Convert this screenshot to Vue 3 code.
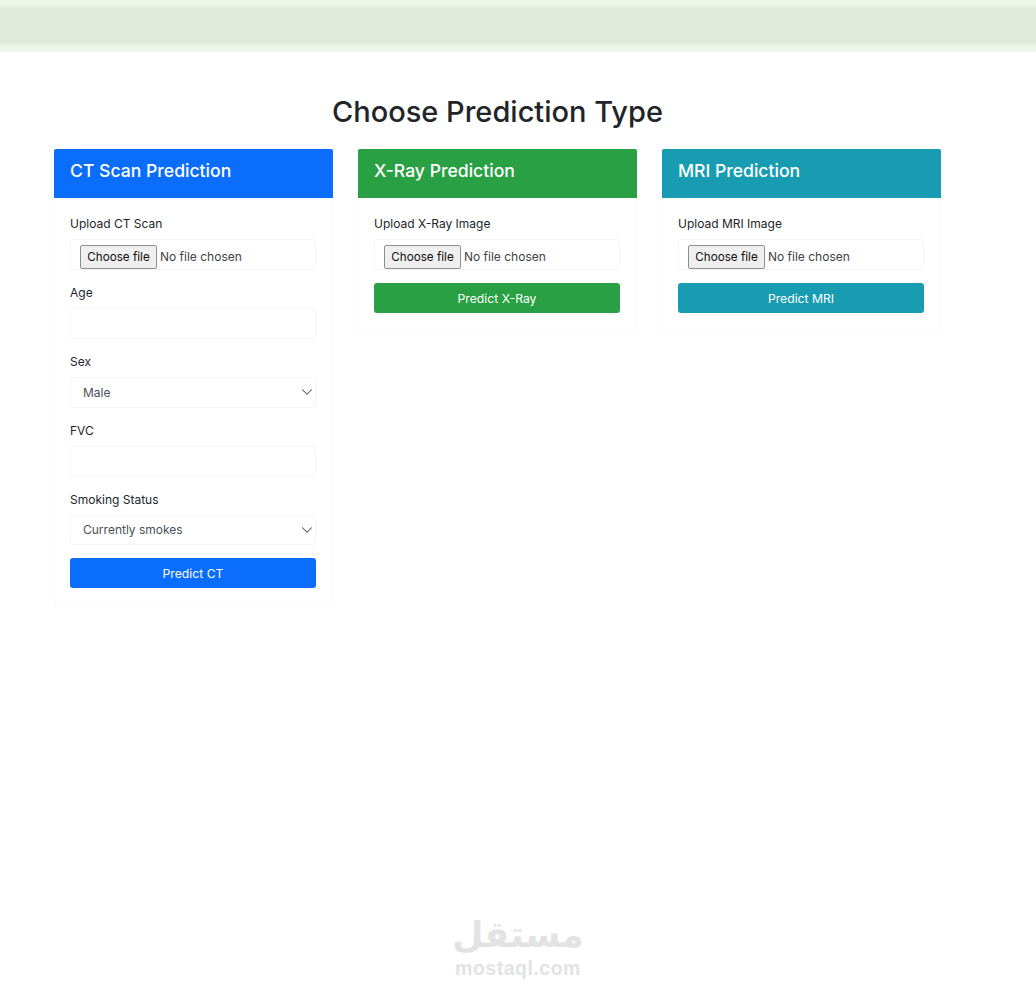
<template>
  <div class="page">
    <nav class="topbar"></nav>

    <main class="content">
      <h2 class="title">Choose Prediction Type</h2>

      <div class="cards">
        <section v-for="card in cards" :key="card.title" class="card" :class="card.tone">
          <header class="card-head">{{ card.title }}</header>
          <form class="card-body" @submit.prevent>
            <div v-for="field in card.fields" :key="field.label" class="group">
              <label class="label">{{ field.label }}</label>
              <div v-if="field.type === 'file'" class="control file">
                <button class="file-btn" type="button">Choose file</button>
                <span>No file chosen</span>
              </div>
              <div v-else-if="field.type === 'select'" class="select-wrap">
                <select class="control select">
                  <option>{{ field.value }}</option>
                </select>
                <svg class="chevron" viewBox="0 0 16 16">
                  <path d="M2 5l6 6 6-6" fill="none" stroke="#495057" stroke-width="1.4" stroke-linecap="round" stroke-linejoin="round" />
                </svg>
              </div>
              <input v-else class="control" type="number" />
            </div>
            <button class="submit" type="submit">{{ card.button }}</button>
          </form>
        </section>
      </div>
    </main>

    <div class="watermark">
      <span class="wm-ar" dir="rtl" lang="ar">مستقل</span>
      <span class="wm-en">mostaql.com</span>
    </div>
  </div>
</template>

<script setup>
const cards = [
  {
    title: 'CT Scan Prediction',
    tone: 'blue',
    button: 'Predict CT',
    fields: [
      { label: 'Upload CT Scan', type: 'file' },
      { label: 'Age', type: 'number' },
      { label: 'Sex', type: 'select', value: 'Male' },
      { label: 'FVC', type: 'number' },
      { label: 'Smoking Status', type: 'select', value: 'Currently smokes' }
    ]
  },
  {
    title: 'X-Ray Prediction',
    tone: 'green',
    button: 'Predict X-Ray',
    fields: [{ label: 'Upload X-Ray Image', type: 'file' }]
  },
  {
    title: 'MRI Prediction',
    tone: 'teal',
    button: 'Predict MRI',
    fields: [{ label: 'Upload MRI Image', type: 'file' }]
  }
]
</script>

<style>
body {
  background: #fff;
}
</style>

<style scoped>
.page {
  position: relative;
  height: 998px;
  overflow: hidden;
  background: #fff;
  color: #212529;
  font-family: Inter, "Liberation Sans", sans-serif;
}

.topbar {
  height: 53px;
  background: linear-gradient(
    to bottom,
    #eef6ea 0,
    #eef6ea 4px,
    #e0e9dc 10px,
    #e0e9dc 43px,
    #ecf4e6 45px,
    #eef6e8 51px,
    #fdfefc 53px
  );
}

.content {
  width: 887px;
  margin-left: 54px;
}

.title {
  margin: 41px 0 19px;
  font-size: 29px;
  line-height: 36px;
  font-weight: 500;
  text-align: center;
}

.cards {
  display: grid;
  grid-template-columns: repeat(3, 279px);
  gap: 25px;
  align-items: start;
}

.card {
  border: 1px solid #f9f9f9;
  border-top: 0;
  border-radius: 3px;
}

.card-head {
  height: 49px;
  margin: 0 -1px;
  padding: 0 16px;
  border-radius: 2px 2px 0 0;
  color: #fff;
  font-size: 17.6px;
  font-weight: 500;
  line-height: 43px;
}

.blue .card-head,
.blue .submit {
  background: #0a6dfb;
}

.green .card-head,
.green .submit {
  background: #28a043;
}

.teal .card-head,
.teal .submit {
  background: #179cb2;
}

.card-body {
  padding: 16px 16px 17px 15px;
}

.group {
  margin-bottom: 13px;
}

.label {
  display: block;
  margin-bottom: 5px;
  font-size: 12px;
  line-height: 20px;
}

.control {
  display: block;
  box-sizing: border-box;
  width: 100%;
  height: 31px;
  border: 1px solid #f5f5f5;
  border-radius: 3px;
  background: #fff;
  font-family: inherit;
  font-size: 12px;
  color: #495057;
}

.file {
  display: flex;
  align-items: center;
  gap: 3px;
  padding: 4px 9px 0;
  color: #3d4246;
}

.file-btn {
  width: 77px;
  height: 24px;
  padding: 0;
  border: 1px solid #8f8f8f;
  border-radius: 2px;
  background: #efefef;
  color: #111;
  font-family: inherit;
  font-size: 11.7px;
}

.select-wrap {
  position: relative;
}

.select {
  height: 30.5px;
  padding: 0 12px;
  appearance: none;
  -webkit-appearance: none;
}

.chevron {
  position: absolute;
  top: 9px;
  right: 3px;
  width: 12px;
  height: 12px;
}

.submit {
  display: block;
  width: 100%;
  height: 30px;
  padding: 0;
  border: 0;
  border-radius: 3px;
  color: #fff;
  font-family: inherit;
  font-size: 12.2px;
}

.watermark {
  position: absolute;
  left: 418px;
  top: 912px;
  width: 200px;
  display: flex;
  flex-direction: column;
  align-items: center;
  color: #e3e3e3;
  font-weight: 700;
}

.wm-ar {
  font-family: "DejaVu Sans", sans-serif;
  font-size: 36px;
  line-height: 46px;
}

.wm-en {
  font-family: "Liberation Sans", sans-serif;
  font-size: 19.5px;
  line-height: 20px;
  letter-spacing: 0.5px;
}
</style>
